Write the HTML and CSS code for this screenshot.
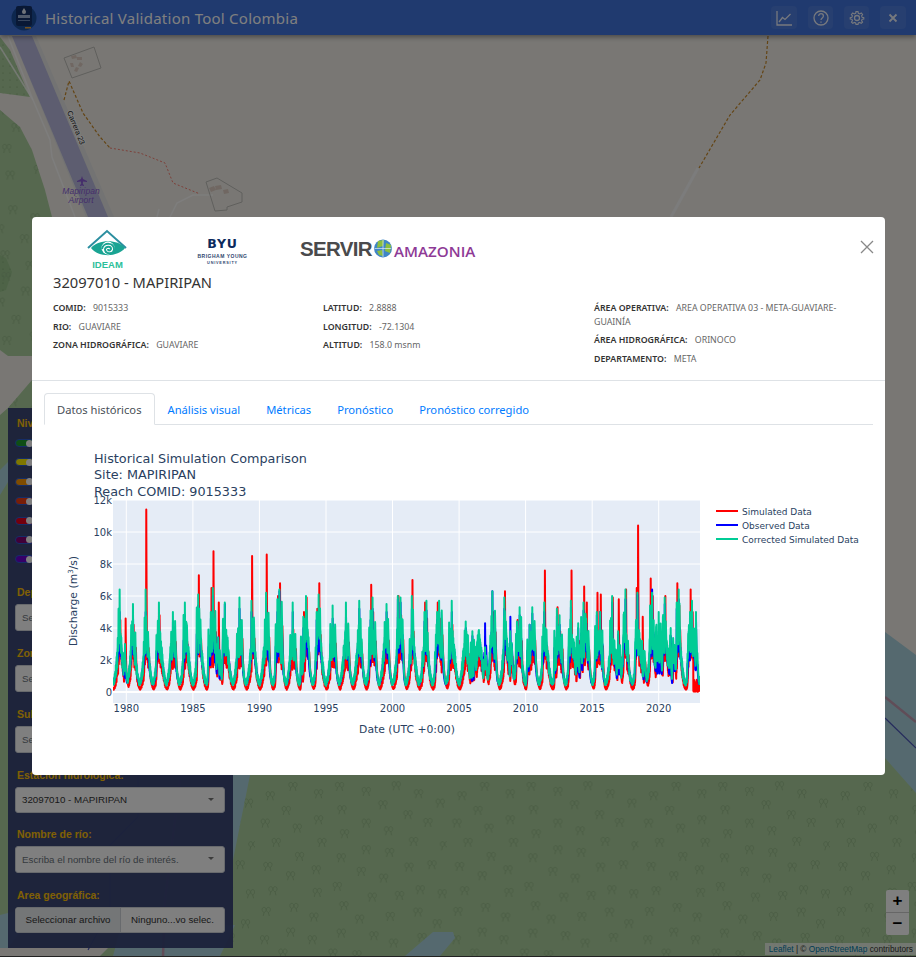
FILE: index.html
```html
<!DOCTYPE html>
<html>
<head>
    <title>Historical Validation Tool Colombia</title>
    <link rel="stylesheet" href="styles.css">
</head>
<body>
    <!-- Map canvas, coordinates are page pixels -->
    <svg class="map" viewBox="0 0 916 956" width="916" height="956">
        <defs>
            <g id="tree">
                <path d="M-4 5 L-3 1 M3 5 L2 1 M-3 1 C-6 0 -6 -5 -3 -5 C0 -5 0 0 -3 1 M2 1 C-1 0 -1 -5 2 -5 C5 -5 5 0 2 1" transform="scale(2.6)"/>
            </g>
            <pattern id="trees" patternUnits="userSpaceOnUse" x="255" y="770" width="191.67" height="192">
                <g transform="translate(-30 0) scale(.3333)" class="tree-marks">
                    <use href="#tree" x="205" y="50"/><use href="#tree" x="345" y="50"/><use href="#tree" x="425" y="65"/>
                    <use href="#tree" x="515" y="48"/><use href="#tree" x="582" y="72"/><use href="#tree" x="137" y="78"/>
                    <use href="#tree" x="282" y="72"/><use href="#tree" x="475" y="105"/><use href="#tree" x="647" y="100"/>
                    <use href="#tree" x="185" y="122"/><use href="#tree" x="352" y="120"/><use href="#tree" x="550" y="135"/>
                    <use href="#tree" x="122" y="160"/><use href="#tree" x="282" y="150"/><use href="#tree" x="425" y="160"/>
                    <use href="#tree" x="610" y="158"/><use href="#tree" x="218" y="175"/><use href="#tree" x="360" y="192"/>
                    <use href="#tree" x="492" y="183"/><use href="#tree" x="155" y="218"/><use href="#tree" x="292" y="218"/>
                    <use href="#tree" x="567" y="215"/><use href="#tree" x="660" y="228"/><use href="#tree" x="425" y="240"/>
                    <use href="#tree" x="495" y="248"/><use href="#tree" x="225" y="260"/><use href="#tree" x="350" y="264"/>
                    <use href="#tree" x="130" y="290"/><use href="#tree" x="275" y="300"/><use href="#tree" x="410" y="305"/>
                    <use href="#tree" x="553" y="292"/><use href="#tree" x="622" y="285"/><use href="#tree" x="198" y="318"/>
                    <use href="#tree" x="477" y="325"/><use href="#tree" x="145" y="363"/><use href="#tree" x="278" y="368"/>
                    <use href="#tree" x="338" y="350"/><use href="#tree" x="653" y="372"/><use href="#tree" x="587" y="360"/>
                    <use href="#tree" x="443" y="382"/><use href="#tree" x="525" y="377"/><use href="#tree" x="125" y="425"/>
                    <use href="#tree" x="208" y="413"/><use href="#tree" x="358" y="408"/><use href="#tree" x="268" y="442"/>
                    <use href="#tree" x="405" y="448"/><use href="#tree" x="497" y="440"/><use href="#tree" x="580" y="427"/>
                    <use href="#tree" x="638" y="462"/><use href="#tree" x="198" y="487"/><use href="#tree" x="350" y="490"/>
                    <use href="#tree" x="448" y="498"/><use href="#tree" x="120" y="510"/><use href="#tree" x="263" y="510"/>
                    <use href="#tree" x="507" y="520"/><use href="#tree" x="592" y="503"/><use href="#tree" x="175" y="550"/>
                    <use href="#tree" x="325" y="550"/><use href="#tree" x="397" y="555"/>
                </g>
            </pattern>
            <pattern id="dots" patternUnits="userSpaceOnUse" width="7" height="7">
                <circle cx="3" cy="3" r=".5" fill="#6f9a66"/>
            </pattern>
            <clipPath id="forest-clip">
                <path d="M0 110 L20 127 L32 150 L45 190 L52 217 L60 350 L32 356 L8 356 L0 350 Z"/>
                <path d="M0 415 L8 408 L32 380 L60 350 L240 500 L250 775 L233 860 L233 956 L405 956 L433 932 L453 932 L455 938 L440 956 L916 956 L916 793 L885 758 L885 700 Z"/>
            </clipPath>
        </defs>

        <rect width="916" height="956" fill="#f2efe9"/>

        <!-- forest below the modal and along the left edge -->
        <path class="forest" d="M0 110 L20 127 L32 150 L45 190 L52 217 L60 350 L32 356 L8 356 L0 350 Z"/>
        <path class="forest" d="M0 415 L8 408 L32 380 L60 350 L240 500 L885 700 L916 790 L916 956 L0 956 Z"/>
        <path class="forest" d="M0 37 L10 50 L30 97 L0 93 Z"/>
        <path fill="url(#dots)" d="M0 37 L10 50 L30 97 L0 93 Z"/>
        <path class="forest-plain" d="M0 255 L6 258 L12 272 L6 290 L0 292 Z"/>
        <path fill="url(#dots)" d="M0 255 L6 258 L12 272 L6 290 L0 292 Z"/>

        <!-- rivers -->
        <path class="water" d="M885 632 L916 655 L916 793 L885 758 Z"/>
        <path class="water" d="M233 775 L250 775 L233 860 Z"/>
        <path class="water" d="M405 956 L433 932 L453 932 L455 938 L440 956 Z"/>
        <path class="water" d="M0 470 L8 462 L8 482 L0 495 Z"/>
        <path class="water" d="M0 915 L40 905 L8 948 L0 948 Z"/>
        <path class="water" d="M113 956 L120 930 L235 925 L220 956 Z"/>
        <path class="land" d="M0 948 L108 948 L100 956 L0 956 Z"/>

        <!-- runway and roads -->
        <path class="runway-edge" d="M12 36 L36 36 L114 217 L86 217 Z"/>
        <path class="runway" d="M12 36 L32 36 L108 217 L88 217 Z"/>
        <path class="road" d="M8 36 L33 100 L50 140 L52 157 L75 217"/>
        <path class="road" d="M0 47 L33 100"/>
        <path class="road" d="M170 217 L177 203 L193 195 L213 195"/>
        <path class="road" d="M157 217 L159 209"/>
        <path class="road-wide" d="M698 168 L671 217"/>

        <!-- farm outlines -->
        <path class="outline" d="M64 58 L94 47 L101 68 L72 78 Z"/>
        <path class="outline" d="M206 182 L217 178 L242 193 L242 202 L227 207 L227 210 L215 211 Z"/>
        <path class="building" d="M71 56 l5 -1 1 3 -5 1 Z M77 57 l5 0 0 3 -5 0 Z M70 63 l3 0 1 4 -3 0 Z M80 62 l3 2 -2 3 -3 -1 Z M76 67 l3 1 -2 4 -3 -1 Z"/>
        <path class="building" d="M209 188 l5 -2 2 4 -5 2 Z M215 186 l6 -1 1 4 -6 1 Z M223 190 l5 -1 1 4 -5 1 Z"/>

        <!-- tracks -->
        <path class="track" d="M64 100 L69 81 L83 113 L100 137 L110 148"/>
        <path class="track" d="M768 36 L766 63 L760 80 L730 115 L699 168"/>
        <path class="trail" d="M110 148 L140 153 L165 163 L173 183 L200 194"/>

        <!-- lines under the panel and at the right edge -->
        <path class="boundary" d="M138 775 L138 817 L110 845 L110 910 L88 950"/>
        <path class="boundary" d="M885 718 L916 748"/>
        <path class="purple-road" d="M180 780 L165 900 L163 956"/>
        <path class="purple-road" d="M885 697 L916 722"/>

        <rect fill="url(#trees)" width="916" height="956" clip-path="url(#forest-clip)"/>

        <text class="map-road-label" transform="translate(67 112) rotate(68)">Carrera 23</text>
        <path class="plane" d="M82 176 L83 179 L87 181 L87 182 L83 181.5 L82.8 184 L84 185 L84 186 L82 185.5 L80 186 L80 185 L81.2 184 L81 181.5 L77 182 L77 181 L81 179 Z"/>
        <text class="map-label" x="81" y="194">Mapiripan</text>
        <text class="map-label" x="81" y="203">Airport</text>
    </svg>

    <nav class="navbar">
        <div class="brand">
            <svg class="brand-icon" viewBox="0 0 26 26" width="26" height="26">
                <circle cx="13" cy="13" r="12.5" fill="#1a4f9c"/>
                <rect x="5" y="1" width="16" height="20" rx="2" fill="#13306a"/>
                <path d="M13 3 C14.5 5.5 15 6 15 7 A2 2 0 0 1 11 7 C11 6 11.5 5.5 13 3 Z" fill="#dfe6f2"/>
                <rect x="7" y="10" width="12" height="3" fill="#9fb3d4"/>
                <rect x="7" y="15" width="12" height="1" fill="#6e8abb"/>
                <rect x="14" y="22" width="6" height="1.5" fill="#e8a33c"/>
            </svg>
            <span class="brand-title">Historical Validation Tool Colombia</span>
        </div>
        <div class="nav-buttons">
            <button class="nav-btn nav-btn-wide">
                <svg viewBox="0 0 16 16" width="16" height="16"><path d="M1 1 V15 H16 M3 12 L6.5 7.5 L9 9.5 L14.5 4"/></svg>
            </button>
            <button class="nav-btn">
                <svg viewBox="0 0 16 16" width="16" height="16"><circle cx="8" cy="8" r="7"/><path d="M5.7 6 C5.7 2.9 10.4 3 10.4 6 C10.4 8 8 7.8 8 10"/><path d="M8 11.5 V12.8"/></svg>
            </button>
            <button class="nav-btn">
                <svg viewBox="0 0 16 16" width="16" height="16"><circle cx="8" cy="8" r="2.5"/><path d="M6.8 1 H9.2 L9.6 3 L11.2 3.7 L13 2.6 L14.6 4.3 L13.4 6 L14 7.6 L16 8 V9.6 L14 10 L13.4 11.6 L14.5 13.3 L13 14.8 L11.2 13.7 L9.6 14.3 L9.2 16 H6.8 L6.4 14.3 L4.8 13.7 L3 14.8 L1.5 13.3 L2.6 11.6 L2 10 L0 9.6 V8 L2 7.6 L2.6 6 L1.4 4.3 L3 2.6 L4.8 3.7 L6.4 3 Z" transform="translate(1.2 .8) scale(.85)"/></svg>
            </button>
            <button class="nav-btn nav-btn-wide">
                <svg viewBox="0 0 16 16" width="16" height="16"><path class="thick" d="M4.5 4.5 L11.5 11.5 M11.5 4.5 L4.5 11.5"/></svg>
            </button>
        </div>
    </nav>

    <!-- Filter panel, lies over the map -->
    <aside class="panel">
        <div class="panel-label">Niveles de alerta:</div>
        <div class="switches">
            <span class="switch sw-green"></span>
            <span class="switch sw-yellow"></span>
            <span class="switch sw-orange"></span>
            <span class="switch sw-redorange"></span>
            <span class="switch sw-red"></span>
            <span class="switch sw-plum"></span>
            <span class="switch sw-violet"></span>
        </div>
        <div class="field">
            <div class="panel-label">Departamento:</div>
            <div class="select">Seleccione...</div>
        </div>
        <div class="field">
            <div class="panel-label">Zona hidrográfica:</div>
            <div class="select">Seleccione...</div>
        </div>
        <div class="field">
            <div class="panel-label">Subzona hidrográfica:</div>
            <div class="select">Seleccione...</div>
        </div>
        <div class="field field-short">
            <div class="panel-label">Estación hidrológica:</div>
            <div class="select select-value">32097010 - MAPIRIPAN</div>
        </div>
        <div class="field">
            <div class="panel-label">Nombre de río:</div>
            <div class="select">Escriba el nombre del río de interés.</div>
        </div>
        <div class="field">
            <div class="panel-label">Area geográfica:</div>
            <div class="file-input">
                <span class="file-btn">Seleccionar archivo</span>
                <span class="file-name">Ninguno...vo selec.</span>
            </div>
        </div>
    </aside>

    <div class="zoom-control">
        <span class="zoom-btn">+</span>
        <span class="zoom-btn">&#8722;</span>
    </div>
    <div class="attribution"><span class="attr-link">Leaflet</span> | © <span class="attr-link">OpenStreetMap</span> contributors</div>

    <div class="backdrop"></div>

    <div class="modal">
        <header class="modal-header">
            <svg class="logos" viewBox="53 228 440 46" width="440" height="46">
                <!-- IDEAM -->
                <path d="M88 248 L107 231 L126 248" fill="none" stroke="#2c8fa0" stroke-width="2"/>
                <path d="M91 248 C97 240 117 238 125 248 C118 257 99 258 91 248 Z" fill="#1aa493"/>
                <circle cx="108" cy="248" r="6.5" fill="#fff"/>
                <path d="M102 249 C103 242 115 242 114 250 C113 255 105 254 105 249 C106 246 111 246 111 249 C110 251 108 251 108 249" fill="none" stroke="#1aa493" stroke-width="2"/>
                <text class="logo-ideam" x="107.5" y="268">IDEAM</text>
                <!-- BYU -->
                <text class="logo-byu" x="222.5" y="248">BYU</text>
                <text class="logo-byu-sub" x="222.5" y="258">BRIGHAM YOUNG</text>
                <text class="logo-byu-small" x="222.5" y="264">UNIVERSITY</text>
                <!-- SERVIR -->
                <text class="logo-servir" x="300" y="256">SERVIR</text>
                <circle cx="383" cy="248.5" r="9" fill="#3f86c6"/>
                <path d="M378 241 L384 240 L383 246 L377 248 Z M386 243 L391 245 L390 253 L385 251 Z M377 251 L382 250 L383 256 L379 255 Z" fill="#8cbf3f"/>
                <path d="M374.5 248.5 H391.5 M383 240 V257" stroke="#dfeaf5" stroke-width=".7"/>
                <text class="logo-amazonia" x="394" y="256.5">AMAZONIA</text>
            </svg>
            <h2 class="station-title">32097010 - MAPIRIPAN</h2>
            <div class="info-grid">
                <div class="info-col">
                    <p><b>COMID:</b> 9015333</p>
                    <p><b>RIO:</b> GUAVIARE</p>
                    <p><b>ZONA HIDROGRÁFICA:</b> GUAVIARE</p>
                </div>
                <div class="info-col">
                    <p><b>LATITUD:</b> 2.8888</p>
                    <p><b>LONGITUD:</b> -72.1304</p>
                    <p><b>ALTITUD:</b> 158.0 msnm</p>
                </div>
                <div class="info-col">
                    <p><b>ÁREA OPERATIVA:</b> AREA OPERATIVA 03 - META-GUAVIARE-GUAINÍA</p>
                    <p><b>ÁREA HIDROGRÁFICA:</b> ORINOCO</p>
                    <p><b>DEPARTAMENTO:</b> META</p>
                </div>
            </div>
            <svg class="modal-close" viewBox="0 0 14 14" width="14" height="14"><path d="M1 1 L13 13 M13 1 L1 13"/></svg>
        </header>

        <div class="modal-body">
            <ul class="tabs">
                <li class="tab active">Datos históricos</li>
                <li class="tab">Análisis visual</li>
                <li class="tab">Métricas</li>
                <li class="tab">Pronóstico</li>
                <li class="tab">Pronóstico corregido</li>
            </ul>

            <!-- viewBox keeps page coordinates -->
            <svg class="chart" viewBox="44 430 829 340" width="829" height="340">
                <defs>
                    <clipPath id="plot-clip"><rect x="113" y="500" width="587" height="203"/></clipPath>
                </defs>
                <rect x="113" y="500" width="587" height="203" fill="#e5ecf6"/>
                <g id="grid" class="grid"></g>
                <g clip-path="url(#plot-clip)">
                    <path id="line-sim" class="series" stroke="#ff0000"/>
                    <path id="line-obs" class="series" stroke="#0000ff"/>
                    <path id="line-cor" class="series" stroke="#00cc96"/>
                </g>
                <g id="ticks" class="ticks"></g>

                <text class="chart-title" x="94" y="463">Historical Simulation Comparison</text>
                <text class="chart-title" x="94" y="479">Site: MAPIRIPAN</text>
                <text class="chart-title" x="94" y="496">Reach COMID: 9015333</text>

                <text class="axis-title" x="407" y="733">Date (UTC +0:00)</text>
                <text class="axis-title" transform="translate(77 601) rotate(-90)">Discharge (m<tspan class="sup" dy="-4">3</tspan><tspan dy="4">/s)</tspan></text>

                <path class="legend-line" d="M716 511 H738" stroke="#ff0000"/>
                <path class="legend-line" d="M716 525 H738" stroke="#0000ff"/>
                <path class="legend-line" d="M716 539 H738" stroke="#00cc96"/>
                <text class="legend-text" x="742" y="515">Simulated Data</text>
                <text class="legend-text" x="742" y="529">Observed Data</text>
                <text class="legend-text" x="742" y="543">Corrected Simulated Data</text>
            </svg>
        </div>
    </div>

    <script src="chart.js"></script>
</body>
</html>
```

FILE: styles.css
```css
/* Page and map */
html, body {
    margin: 0;
    height: 100%;
    overflow: hidden;
    background-color: #444;
    font-family: "Noto Sans", "Open Sans", sans-serif;
}

.map {
    position: absolute;
    left: 0;
    top: 0;
    display: block;
}

.forest { fill: #add19e; }
.forest-plain { fill: #9cc78f; }
.water { fill: #aad3df; }
.land { fill: #f2efe9; }
.tree-marks { fill: none; stroke: #94b887; stroke-width: 1; }
.runway { fill: #babbe0; }
.runway-edge { fill: #e6e6e6; }
.road { fill: none; stroke: #ffffff; stroke-width: 1.5; opacity: .75; }
.road-wide { fill: none; stroke: #f8f8f8; stroke-width: 3; }
.outline { fill: none; stroke: #c0bfba; stroke-width: 1; }
.building { fill: #e0cfc4; }
.track { fill: none; stroke: #c98a2a; stroke-width: 1.2; stroke-dasharray: 3 2; }
.trail { fill: none; stroke: #fa8072; stroke-width: 1; stroke-dasharray: 2 2; }
.boundary { fill: none; stroke: #4a55b8; stroke-width: 1.2; }
.purple-road { fill: none; stroke: #c09ab0; stroke-width: 2.5; }
.plane { fill: #8a5cd6; }

.map-road-label {
    font: 7.5px "Liberation Sans", sans-serif;
    fill: #222;
    stroke: #fff;
    stroke-width: 2px;
    paint-order: stroke;
}

.map-label {
    font: italic 8.5px "Liberation Sans", sans-serif;
    fill: #8a5cd6;
    text-anchor: middle;
}

/* Navbar */
.navbar {
    position: relative;
    height: 35px;
    display: flex;
    align-items: center;
    justify-content: space-between;
    padding: 0 10px 0 11px;
    background-color: #4074de;
    box-shadow: 0 2px 5px rgba(0, 0, 0, 0.4);
    box-sizing: border-box;
}

.brand {
    display: flex;
    align-items: center;
    gap: 8px;
}

.brand-icon {
    display: block;
}

.brand-title {
    color: #fff;
    font-size: 15px;
    letter-spacing: .25px;
}

.nav-buttons {
    display: flex;
    gap: 11px;
}

.nav-btn {
    width: 25px;
    height: 23px;
    padding: 0;
    display: flex;
    align-items: center;
    justify-content: center;
    border: none;
    border-radius: 4px;
    background-color: rgba(255, 255, 255, 0.08);
}

.nav-btn-wide {
    width: 26px;
}

.nav-btn svg {
    fill: none;
    stroke: #fff;
    stroke-width: 1.3;
    opacity: .9;
}

.nav-btn .thick {
    stroke-width: 1.8;
}

/* Filter panel */
.panel {
    position: absolute;
    left: 8px;
    top: 408px;
    width: 225px;
    height: 540px;
    padding: 8px 8px 0 7px;
    box-sizing: border-box;
    background-color: rgba(56, 68, 118, 0.96);
}

.panel-label {
    padding-left: 2px;
    color: #ffc107;
    font: bold 10.5px "Liberation Sans", sans-serif;
    line-height: 14px;
}

.switches {
    display: flex;
    flex-direction: column;
    gap: 11.4px;
    margin: 9px 0 22px;
}

.switch {
    position: relative;
    display: block;
    width: 19px;
    height: 8px;
    box-sizing: border-box;
    border: 1px solid #2a5ad0;
    border-radius: 4px;
}

.switch::after {
    content: "";
    position: absolute;
    right: 0;
    top: -.5px;
    width: 7px;
    height: 7px;
    border-radius: 50%;
    background-color: #fff;
}

.sw-green { background-color: #1f9d2a; }
.sw-yellow { background-color: #ffee00; }
.sw-orange { background-color: #ff9900; }
.sw-redorange { background-color: #f03c10; }
.sw-red { background-color: #e6001a; }
.sw-plum { background-color: #800070; }
.sw-violet { background-color: #6a00d0; }

.field {
    height: 61px;
}

.field-short {
    height: 59px;
}

.select {
    position: relative;
    height: 27px;
    margin-top: 5px;
    padding: 0 6px;
    box-sizing: border-box;
    border: 1px solid #d0d4da;
    border-radius: 3px;
    background-color: #fff;
    color: #6c757d;
    font: 9.75px/25px "Liberation Sans", sans-serif;
}

.select-value {
    height: 26px;
    color: #333;
    line-height: 23px;
}

.select::after {
    content: "";
    position: absolute;
    right: 10px;
    top: 10px;
    border-style: solid;
    border-width: 3px 3.5px 0;
    border-color: #777 transparent transparent;
}

.file-input {
    display: flex;
    height: 26px;
    margin-top: 5px;
    box-sizing: border-box;
    border: 1px solid #d0d4da;
    border-radius: 3px;
    overflow: hidden;
    background-color: #fff;
    color: #333;
    font: 9.75px/24px "Liberation Sans", sans-serif;
    white-space: nowrap;
}

.file-btn {
    width: 104px;
    text-align: center;
    background-color: #e9ecef;
    border-right: 1px solid #d0d4da;
}

.file-name {
    flex: 1;
    text-align: center;
}

/* Leaflet controls */
.zoom-control {
    position: absolute;
    left: 886px;
    top: 890px;
    width: 23px;
    display: flex;
    flex-direction: column;
    border-radius: 2px;
    overflow: hidden;
    background-color: #fff;
}

.zoom-btn {
    height: 22px;
    text-align: center;
    color: #000;
    font: bold 17px/22px "Liberation Sans", sans-serif;
    border-bottom: 1px solid #ccc;
}

.zoom-btn:last-child {
    border-bottom: none;
}

.attribution {
    position: absolute;
    right: 0;
    top: 943px;
    height: 12px;
    padding: 0 3px 0 4px;
    background-color: rgba(255, 255, 255, 0.7);
    color: #333;
    font: 8.3px/12px "Liberation Sans", sans-serif;
}

.attr-link {
    color: #0078a8;
}

.backdrop {
    position: fixed;
    inset: 0;
    background-color: #000;
    opacity: .5;
}

/* Modal */
.modal {
    position: fixed;
    left: 32px;
    top: 217px;
    width: 853px;
    height: 558px;
    border-radius: 4px;
    background-color: #fff;
    color: #333;
    overflow: hidden;
}

.modal-header {
    position: relative;
    height: 164px;
    padding: 11px 21px 0;
    box-sizing: border-box;
    border-bottom: 1px solid #dee2e6;
}

.logos {
    display: block;
}

.station-title {
    margin: 0;
    font-size: 14.7px;
    line-height: 16px;
    font-weight: 400;
    color: #333;
}

.info-grid {
    display: grid;
    grid-template-columns: 270px 271px 250px;
    margin-top: 12px;
}

.info-col p {
    margin: 0 0 5px;
    font-size: 8.8px;
    line-height: 13.5px;
    color: #666;
}

.info-col b {
    color: #333;
    font-weight: 600;
    margin-right: 5px;
}

.modal-close {
    position: absolute;
    right: 11px;
    top: 23px;
    fill: none;
    stroke: #888;
    stroke-width: 1.3;
}

.modal-body {
    padding: 12px 12px 0;
}

.tabs {
    display: flex;
    margin: 0;
    padding: 0;
    list-style: none;
    border-bottom: 1px solid #dee2e6;
}

.tab {
    height: 32px;
    margin-bottom: -1px;
    padding: 0 12px;
    box-sizing: border-box;
    font-size: 11.2px;
    line-height: 32px;
    color: #007bff;
    border: 1px solid transparent;
    border-radius: 4px 4px 0 0;
}

.tab.active {
    color: #495057;
    background-color: #fff;
    border-color: #dee2e6 #dee2e6 #fff;
}

/* Plot */
.chart {
    display: block;
    margin-top: 5px;
    font-family: "DejaVu Sans", Verdana, sans-serif;
    fill: #2a3f5f;
}

.grid path {
    stroke: #fff;
    stroke-width: 1;
    fill: none;
}

.grid .zero {
    stroke-width: 2;
}

.series {
    fill: none;
    stroke-width: 2;
    stroke-linejoin: round;
}

.ticks text {
    font-size: 10px;
}

.ticks .y-tick {
    text-anchor: end;
}

.ticks .x-tick {
    text-anchor: middle;
}

.chart-title {
    font-size: 12.8px;
}

.axis-title {
    font-size: 10.8px;
    text-anchor: middle;
}

.sup {
    font-size: 7px;
}

.legend-line {
    fill: none;
    stroke-width: 2;
}

.legend-text {
    font-size: 9px;
}

.logo-ideam {
    font: bold 9.5px "Liberation Sans", sans-serif;
    fill: #2cc09a;
    text-anchor: middle;
}

.logo-byu {
    font: bold 12.5px "DejaVu Sans", sans-serif;
    fill: #0c2a5c;
    text-anchor: middle;
    letter-spacing: .8px;
}

.logo-byu-sub {
    font: bold 5px "Liberation Sans", sans-serif;
    fill: #2f4770;
    text-anchor: middle;
    letter-spacing: .5px;
}

.logo-byu-small {
    font: bold 3.8px "Liberation Sans", sans-serif;
    fill: #2f4770;
    text-anchor: middle;
    letter-spacing: .8px;
}

.logo-servir {
    font: bold 20.5px "Liberation Sans", sans-serif;
    fill: #4a4a4c;
    letter-spacing: -.7px;
}

.logo-amazonia {
    font: 15.2px "Open Sans", sans-serif;
    font-weight: 600;
    fill: #8e3a96;
}
```

FILE: chart.js
```js
// Plot area: 1979.0 at x=113, 13.31 px per year, 0 at y=692, 16 px per 1000 m3/s
function xPos(year) { return 113 + (year - 1979) * 13.31; }
function yPos(value) { return 692 - value * 0.016; }

// Seeded random so that the picture is the same on every load
let seed = 20230;
function rand() {
    seed = (seed + 0x6D2B79F5) | 0;
    let t = Math.imul(seed ^ (seed >>> 15), 1 | seed);
    t = (t + Math.imul(t ^ (t >>> 7), 61 | t)) ^ t;
    return ((t ^ (t >>> 14)) >>> 0) / 4294967296;
}

// Peaks read off the figure: [year, corrected, simulated, observed]
const peaks = [
    [1979.5, 6400, 4500, 5000], [1979.9, 3000, 4600, 2600], [1980.5, 5500, 4200, 4600],
    [1981.45, 6400, 11400, 5000], [1982.45, 5600, 4800, 5000], [1983.5, 5000, 3800, 4400],
    [1984.4, 5600, 4200, 4800], [1985.4, 6100, 7300, 5400], [1986.35, 5000, 6500, 4600],
    [1986.5, 6500, 8800, 6000], [1986.9, 3400, 5600, 3400], [1987.4, 5600, 3800, 5500],
    [1988.5, 5900, 4500, 5200], [1989.4, 5700, 8500, 5000], [1990.5, 6200, 8600, 5400],
    [1991.35, 5800, 6000, 5000], [1991.5, 6400, 6800, 6300], [1992.5, 5600, 3900, 5000],
    [1993.3, 4700, 5000, 4000], [1993.5, 6000, 5900, 5000], [1994.3, 5000, 5200, 4500],
    [1994.45, 6100, 6800, 5000], [1995.5, 5400, 4000, 4600], [1996.5, 5600, 4200, 5000],
    [1997.5, 5700, 4300, 5200], [1998.35, 5100, 6700, 4500], [1998.5, 5900, 5000, 5200],
    [1999.55, 5500, 4600, 5000], [2000.4, 6000, 6000, 5800], [2000.6, 5900, 4800, 5600],
    [2001.45, 6000, 7000, 5200], [2002.4, 5000, 5600, 4400], [2002.55, 5700, 4600, 5100],
    [2003.35, 5000, 5600, 4500], [2003.5, 5700, 4600, 5000], [2004.45, 5700, 4200, 5000],
    [2005.5, 4400, 3400, 4000], [2006.0, 3800, 2800, 3500], [2006.5, 3600, 3100, 3300],
    [2006.95, 2800, 2400, 4300], [2007.5, 6300, 5000, 6300], [2008.4, 5900, 6300, 5200],
    [2008.85, 3800, 3000, 4700], [2009.35, 4400, 4500, 3900], [2009.55, 5300, 3900, 4800],
    [2010.3, 4200, 3700, 4200], [2010.5, 5300, 4100, 4900], [2011.4, 5600, 7600, 5000],
    [2012.35, 5200, 5300, 4800], [2012.55, 4800, 3800, 4200], [2013.4, 5700, 7600, 5300],
    [2013.95, 4300, 3200, 4000], [2014.35, 5600, 6600, 5100], [2014.55, 4600, 5600, 4300],
    [2015.35, 5000, 6200, 4800], [2015.6, 5000, 6100, 5000], [2016.5, 6000, 5900, 5600],
    [2016.95, 3800, 5800, 3600], [2017.5, 6400, 6400, 5800], [2018.3, 4500, 6500, 4000],
    [2018.4, 6200, 10400, 6100], [2018.75, 3200, 4700, 3000], [2019.35, 5400, 7100, 5100],
    [2019.5, 6200, 6000, 6400], [2020.0, 5000, 3800, 3800], [2020.45, 5900, 6000, 5500],
    [2020.9, 4000, 3000, 3500], [2021.35, 5600, 6800, 5200], [2021.5, 6400, 5400, 5800],
    [2022.35, 5000, 6400, 4500], [2022.5, 5700, 5000, 5000], [2022.8, 5000, 2800, 4400]
];

// Main peaks plus smaller floods around each of them
const events = [];
peaks.forEach(p => {
    events.push({ t: p[0], v: [p[2], p[3], p[1]], w: 0.028, main: true });
    for (let i = 0; i < 6; i++) {
        const h = 0.5 + 0.4 * rand();
        events.push({
            t: p[0] + (rand() - 0.5) * 0.4,
            v: [p[1] * h * 0.72, p[3] * h * 0.8, p[1] * h],
            w: 0.04 + 0.05 * rand()
        });
    }
});

// Season curve: dry near the new year, wet in the middle
function baseFlow(year, floor, amp, noise) {
    const frac = year - Math.floor(year);
    const d = (frac - 0.5) / 0.28;
    return (floor + amp * Math.exp(-d * d)) * (1 - noise + 2 * noise * rand());
}

function buildPath(index, floor, amp, shift, noise) {
    const times = [];
    for (let x = 1979; x < 2023.1; x += 1 / 146) times.push(x);
    events.forEach(e => { if (e.main) times.push(e.t + shift); });
    times.sort((a, b) => a - b);

    let d = "";
    times.forEach((x, n) => {
        let v = baseFlow(x - shift, floor, amp, noise);
        events.forEach(e => {
            const dt = x - shift - e.t;
            if (Math.abs(dt) > 0.4) return;
            const spike = e.v[index] * Math.exp(dt < 0 ? dt / (e.w * 0.6) : -dt / (e.w * 1.5));
            if (spike > v) v = spike;
        });
        // the simulated run drops to nearly nothing at the end of the record
        if (index === 0 && x > 2022.6) v = Math.min(v, 800 * rand());
        d += (n ? "L" : "M") + xPos(x).toFixed(2) + " " + yPos(v).toFixed(1);
    });
    return d;
}

// the observed band sits inside the corrected one, so blue only shows at its own peaks
document.getElementById("line-sim").setAttribute("d", buildPath(0, 100, 2000, 0.05, 0.3));
document.getElementById("line-obs").setAttribute("d", buildPath(1, 420, 2400, 0.005, 0.15));
document.getElementById("line-cor").setAttribute("d", buildPath(2, 430, 2600, 0, 0.3));

// Grid lines and tick labels
const svgNS = "http://www.w3.org/2000/svg";
const grid = document.getElementById("grid");
const ticks = document.getElementById("ticks");

function addLine(d, zero) {
    const line = document.createElementNS(svgNS, "path");
    line.setAttribute("d", d);
    if (zero) line.setAttribute("class", "zero");
    grid.appendChild(line);
}

function addTick(x, y, label, cls) {
    const text = document.createElementNS(svgNS, "text");
    text.setAttribute("x", x);
    text.setAttribute("y", y);
    text.setAttribute("class", cls);
    text.textContent = label;
    ticks.appendChild(text);
}

for (let year = 1980; year <= 2020; year += 5) {
    const x = xPos(year).toFixed(1);
    addLine("M" + x + " 500V703");
    addTick(x, 712, String(year), "x-tick");
}

for (let v = 0; v <= 12000; v += 2000) {
    const y = yPos(v);
    addLine("M113 " + y + "H700", v === 0);
    addTick(112, y + 4, v === 0 ? "0" : (v / 1000) + "k", "y-tick");
}
```
